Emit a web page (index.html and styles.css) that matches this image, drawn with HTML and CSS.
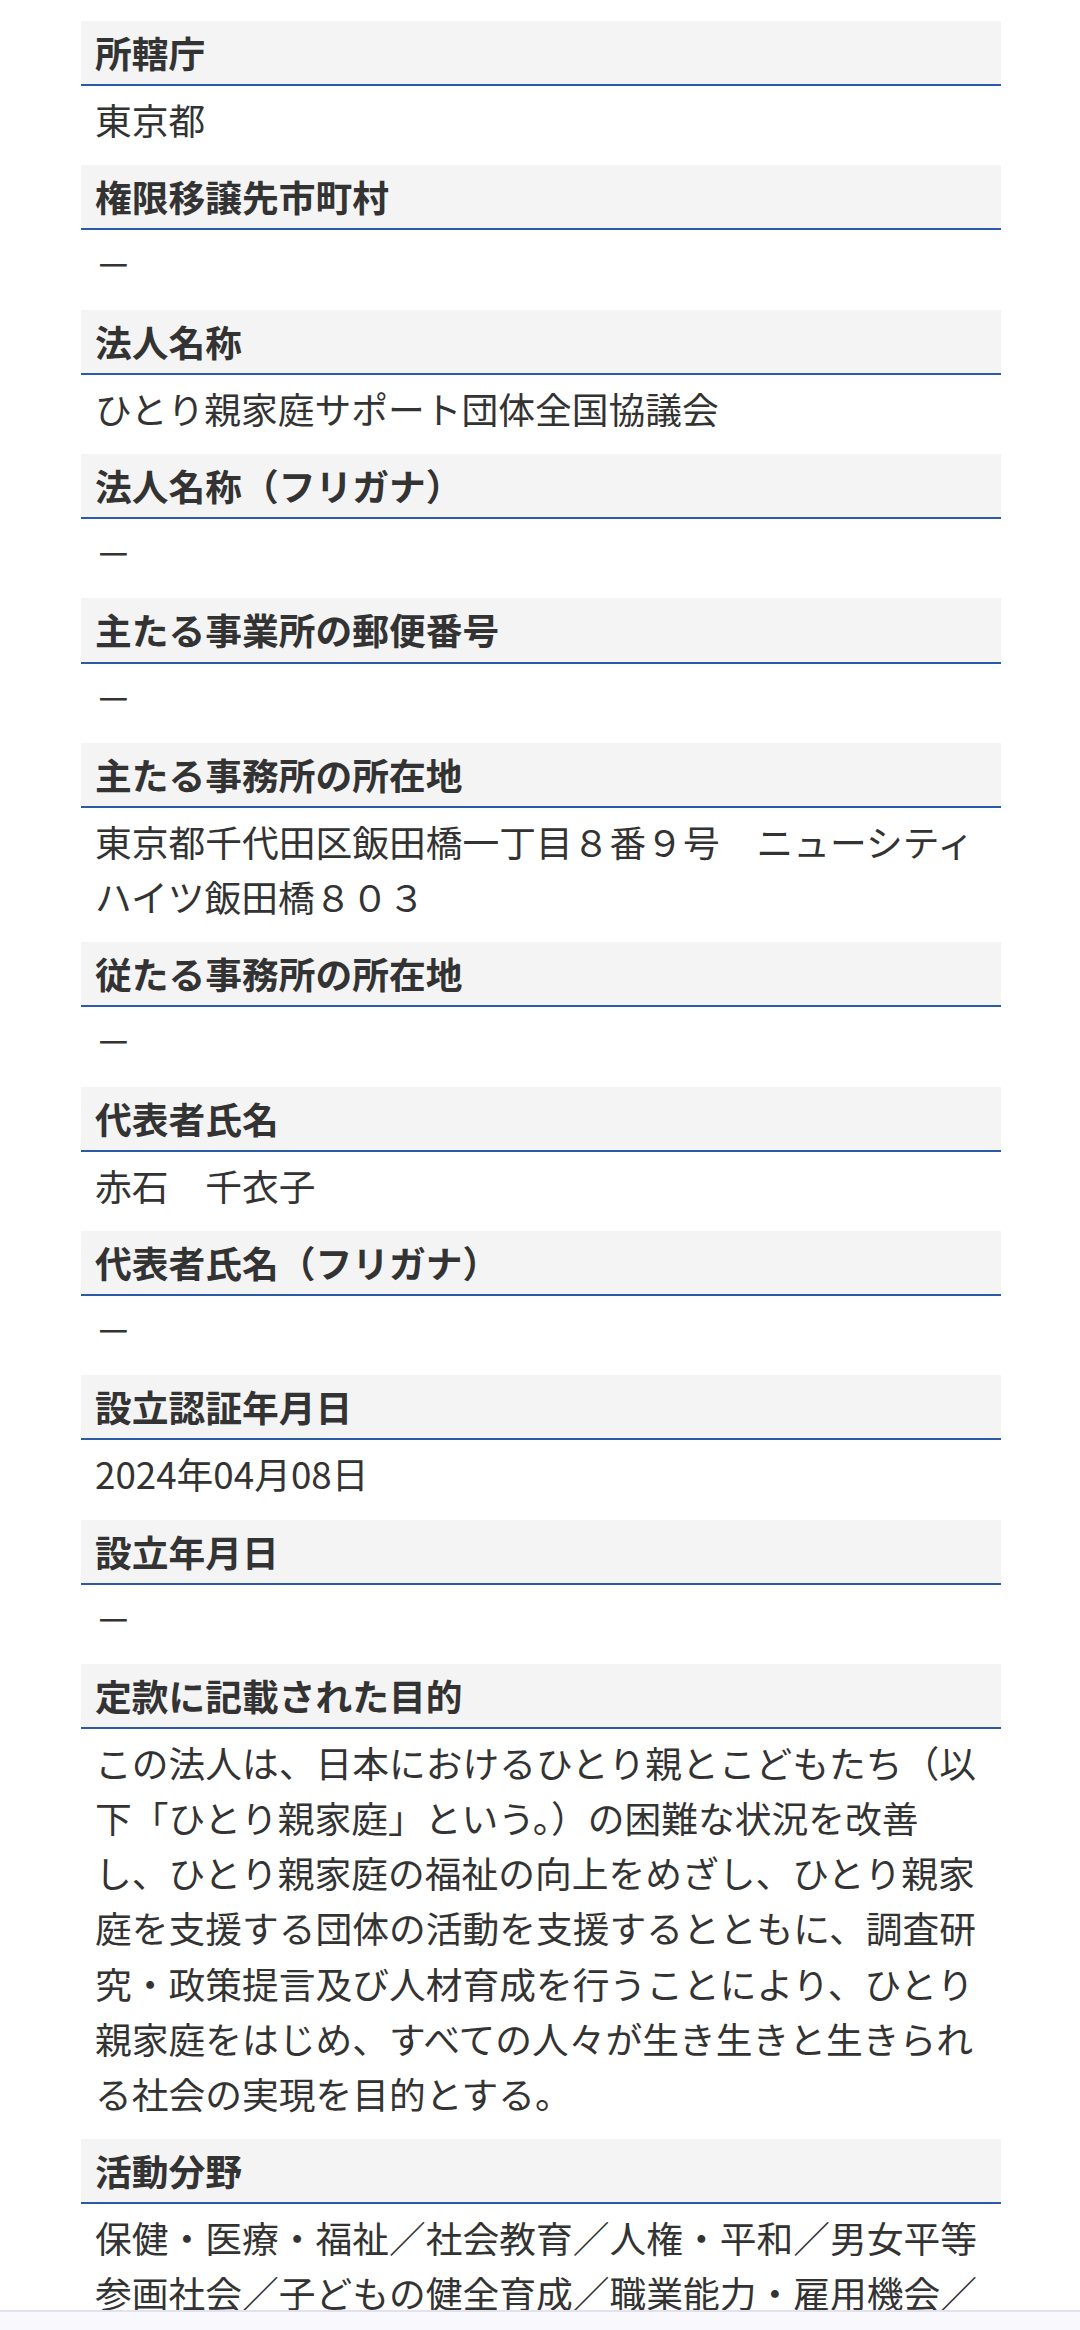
FILE: index.html
```html
<!DOCTYPE html>
<html lang="ja">
  <head>
    <meta charset="UTF-8" />
    <meta name="viewport" content="width=device-width, initial-scale=1.0" />
    <title>法人詳細</title>
    <link rel="stylesheet" href="styles.css">
  </head>
  <body>
    <dl class="detail-list">
      <div class="detail-item">
        <dt class="detail-label">所轄庁</dt>
        <dd class="detail-value">東京都</dd>
      </div>
      <div class="detail-item">
        <dt class="detail-label">権限移譲先市町村</dt>
        <dd class="detail-value">－</dd>
      </div>
      <div class="detail-item">
        <dt class="detail-label">法人名称</dt>
        <dd class="detail-value">ひとり親家庭サポート団体全国協議会</dd>
      </div>
      <div class="detail-item">
        <dt class="detail-label">法人名称（フリガナ）</dt>
        <dd class="detail-value">－</dd>
      </div>
      <div class="detail-item">
        <dt class="detail-label">主たる事業所の郵便番号</dt>
        <dd class="detail-value">－</dd>
      </div>
      <div class="detail-item">
        <dt class="detail-label">主たる事務所の所在地</dt>
        <dd class="detail-value">東京都千代田区飯田橋一丁目８番９号　ニューシティハイツ飯田橋８０３</dd>
      </div>
      <div class="detail-item">
        <dt class="detail-label">従たる事務所の所在地</dt>
        <dd class="detail-value">－</dd>
      </div>
      <div class="detail-item">
        <dt class="detail-label">代表者氏名</dt>
        <dd class="detail-value">赤石　千衣子</dd>
      </div>
      <div class="detail-item">
        <dt class="detail-label">代表者氏名（フリガナ）</dt>
        <dd class="detail-value">－</dd>
      </div>
      <div class="detail-item">
        <dt class="detail-label">設立認証年月日</dt>
        <dd class="detail-value">2024年04月08日</dd>
      </div>
      <div class="detail-item">
        <dt class="detail-label">設立年月日</dt>
        <dd class="detail-value">－</dd>
      </div>
      <div class="detail-item">
        <dt class="detail-label">定款に記載された目的</dt>
        <dd class="detail-value">この法人は、日本におけるひとり親とこどもたち（以下「ひとり親家庭」という。）の困難な状況を改善し、ひとり親家庭の福祉の向上をめざし、ひとり親家庭を支援する団体の活動を支援するとともに、調査研究・政策提言及び人材育成を行うことにより、ひとり親家庭をはじめ、すべての人々が生き生きと生きられる社会の実現を目的とする。</dd>
      </div>
      <div class="detail-item">
        <dt class="detail-label">活動分野</dt>
        <dd class="detail-value">保健・医療・福祉／社会教育／人権・平和／男女平等参画社会／子どもの健全育成／職業能力・雇用機会／経済活動の活性化</dd>
      </div>
    </dl>

    <div class="bottom-bar"></div>
  </body>
</html>
```

FILE: styles.css
```css
:root {
  --text: #333333;
  --label-bg: #f4f4f4;
  --accent: #2a5ba8;
  --bar-bg: #f8f8fd;
  --bar-line: #e2e1ec;
}

* {
  margin: 0;
  padding: 0;
  box-sizing: border-box;
}

html,
body {
  height: 100%;
  overflow: hidden;
}

body {
  font-family: "Noto Sans CJK JP", "Noto Sans", sans-serif;
  font-size: 36.75px;
  line-height: 1.5;
  color: var(--text);
  background: #ffffff;
}

.detail-list {
  width: 920px;
  margin-left: 81px;
  padding-top: 21px;
}

.detail-label {
  background: var(--label-bg);
  border-bottom: 2.6px solid var(--accent);
  padding: 4px 14px;
  font-weight: 700;
}

.detail-value {
  padding: 6px 14px 18.1px;
}

.bottom-bar {
  position: fixed;
  left: 0;
  right: 0;
  bottom: 0;
  height: 20px;
  background: var(--bar-bg);
  border-top: 2px solid var(--bar-line);
}
```
